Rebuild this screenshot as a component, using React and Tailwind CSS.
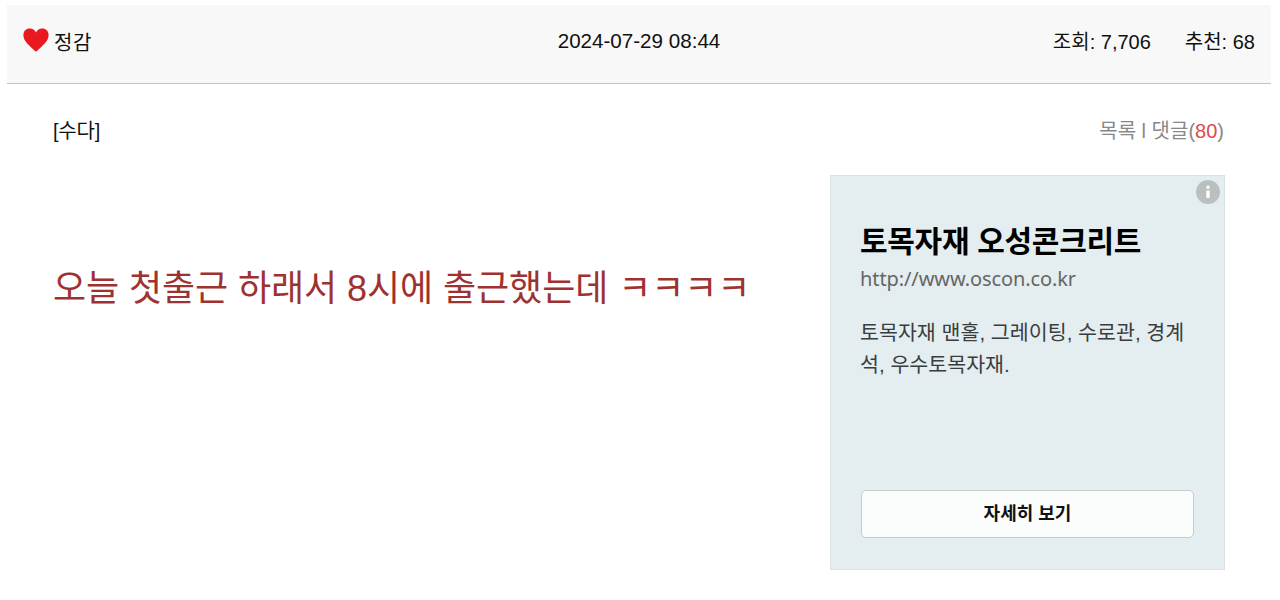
const ad = {
  title: '토목자재 오성콘크리트',
  url: 'http://www.oscon.co.kr',
  lines: ['토목자재 맨홀, 그레이팅, 수로관, 경계', '석, 우수토목자재.'],
};

function HeartIcon() {
  return (
    <svg className="w-[26px] h-6 -translate-y-px" viewBox="0 0 26 24">
      <path
        d="M13 4.600C11.700 1.800 9.600.5 6.900.5 3 .5.4 3.200.4 7.200c0 6.300 7 11 11.600 15.800q1 1 2 0C18.600 18.200 25.600 13.500 25.600 7.200c0-4-2.600-6.700-6.500-6.700-2.700 0-4.800 1.300-6.100 4.100z"
        fill="#e8191f"
      />
    </svg>
  );
}

function InfoIcon() {
  return (
    <svg className="w-6 h-6" viewBox="0 0 24 24">
      <circle cx="12" cy="12" r="12" fill="#babfc0" />
      <circle cx="12" cy="7.300" r="1.700" fill="#fff" />
      <rect x="10.300" y="10.500" width="3.400" height="7.500" rx="0.500" fill="#fff" />
    </svg>
  );
}

function PostHeader() {
  return (
    <header className="grid grid-cols-3 items-center h-[79px] ml-[7px] mr-[9px] mt-[5px] pl-4 pr-4 pb-[6px] bg-[#f8f8f8] border-b border-[#c4c4c4] text-[20px] text-[#111]">
      <div className="flex items-center gap-[5px]">
        <HeartIcon />
        <span className="pt-1 tracking-[0.5px]">정감</span>
      </div>
      <span className="text-center text-[20.600px]">2024-07-29 08:44</span>
      <div className="flex justify-end gap-[34px] pt-0.5 whitespace-nowrap">
        <span>조회: 7,706</span>
        <span>추천: 68</span>
      </div>
    </header>
  );
}

function AdCard() {
  return (
    <aside className="relative flex flex-col w-[395px] h-[395px] pl-[29px] pr-[30px] pt-[46px] pb-[31px] bg-[#e4edef] border border-[#d9e3e4]">
      <div className="absolute top-1 right-1">
        <InfoIcon />
      </div>
      <h2 className="text-[30px] leading-[40px] tracking-[-0.3px] font-bold text-black whitespace-nowrap">{ad.title}</h2>
      <p className="mt-px font-['Noto_Sans'] text-[20px] leading-[32px] tracking-[-0.1px] text-[#666]">{ad.url}</p>
      <div className="mt-[22px] text-[20.600px] leading-[32px] text-[#3a3d3e] whitespace-nowrap">
        {ad.lines.map((line) => (
          <p key={line}>{line}</p>
        ))}
      </div>
      <button className="mt-auto ml-px h-[48px] bg-[#fbfcfc] border border-[#c5cacb] rounded-[5px] text-[18px] font-bold text-[#111]">
        자세히 보기
      </button>
    </aside>
  );
}

export default function App() {
  return (
    <div className="flow-root w-[1280px] h-[600px] overflow-hidden bg-white font-['Liberation_Sans','Noto_Sans_CJK_KR',sans-serif]">
      <PostHeader />
      <main className="pl-[53px] pr-[55px] pt-[31px]">
        <div className="flex justify-between h-[60px] pt-px pr-px text-[20px] leading-[30px]">
          <span className="tracking-[-0.2px] text-[#111]">[수다]</span>
          <span className="text-[#888]">
            목록 l 댓글(<span className="text-[#e04a4c]">80</span>)
          </span>
        </div>
        <div className="flex justify-between">
          <h1 className="pt-[88px] text-[36px] leading-[52px] tracking-[-0.080px] text-[#9e3230] whitespace-nowrap">
            오늘 첫출근 하래서 8시에 출근했는데 ㅋㅋㅋㅋ
          </h1>
          <AdCard />
        </div>
      </main>
    </div>
  );
}
